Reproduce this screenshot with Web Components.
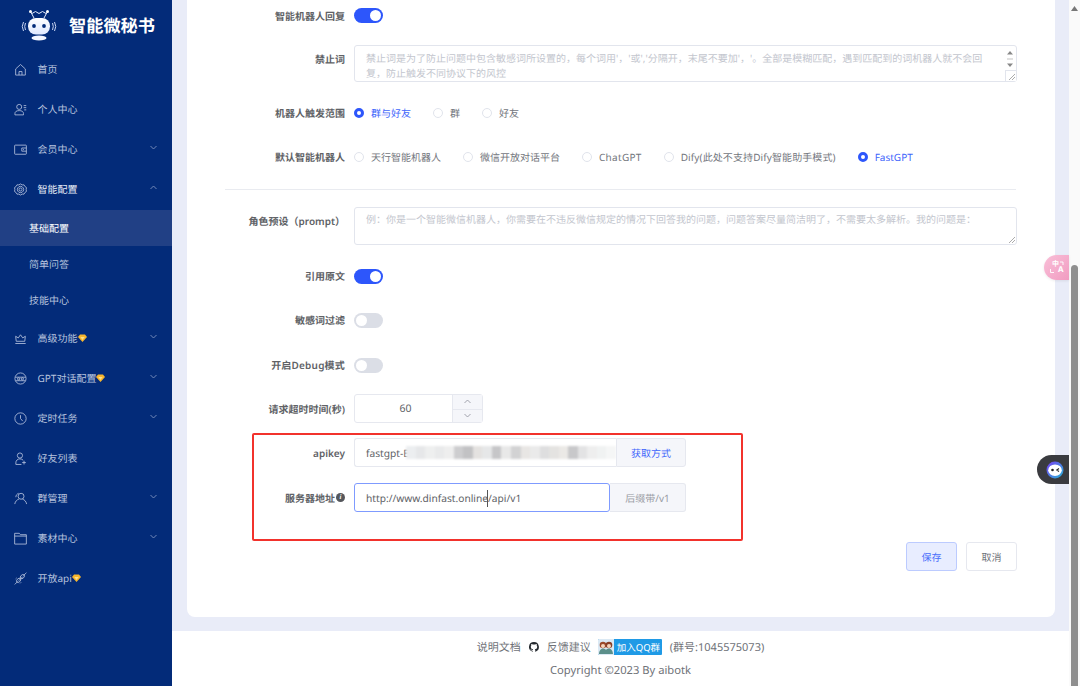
<!DOCTYPE html>
<html lang="zh"><head><meta charset="utf-8"><title>智能微秘书</title>
<style>
html,body{margin:0;height:100%;overflow:hidden;background:#fff}
body{font-family:"Noto Sans","Noto Sans CJK SC",sans-serif;font-size:10px;color:#606266;text-rendering:geometricPrecision}
</style></head><body>
<app-shell>
  <side-nav slot="side">
    <nav-item icon="home" label="首页"></nav-item>
    <nav-item icon="user" label="个人中心"></nav-item>
    <nav-item icon="wallet" label="会员中心" arrow="down"></nav-item>
    <nav-item icon="gear" label="智能配置" arrow="up" open></nav-item>
    <nav-sub label="基础配置" active></nav-sub>
    <nav-sub label="简单问答"></nav-sub>
    <nav-sub label="技能中心"></nav-sub>
    <nav-item icon="crown" label="高级功能" arrow="down" gem></nav-item>
    <nav-item icon="chat" label="GPT对话配置" arrow="down" gem></nav-item>
    <nav-item icon="clock" label="定时任务" arrow="down"></nav-item>
    <nav-item icon="friend" label="好友列表"></nav-item>
    <nav-item icon="group" label="群管理" arrow="down"></nav-item>
    <nav-item icon="folder" label="素材中心" arrow="down"></nav-item>
    <nav-item icon="plug" label="开放api" gem></nav-item>
  </side-nav>
  <config-card>
    <form-row label="智能机器人回复" h="15" mb="22"><x-switch on></x-switch></form-row>
    <form-row label="禁止词" h="37" mb="17" top><x-area h="37" pad="5" lines="禁止词是为了防止问题中包含敏感词所设置的，每个词用'，'或','分隔开，末尾不要加'，'。全部是模糊匹配，遇到匹配到的词机器人就不会回<br>复，防止触发不同协议下的风控" spin></x-area></form-row>
    <form-row label="机器人触发范围" h="28" mb="16"><radio-set>
      <x-radio label="群与好友" on></x-radio><x-radio label="群"></x-radio><x-radio label="好友"></x-radio>
    </radio-set></form-row>
    <form-row label="默认智能机器人" h="28" mb="0"><radio-set>
      <x-radio label="天行智能机器人"></x-radio><x-radio label="微信开放对话平台"></x-radio><x-radio label="ChatGPT" ls=".3"></x-radio><x-radio label="Dify(此处不支持Dify智能助手模式)" ls=".1"></x-radio><x-radio label="FastGPT" on></x-radio>
    </radio-set></form-row>
    <form-rule></form-rule>
    <form-row label="角色预设（prompt）" h="38" mb="17" top><x-area h="38" pad="4" lines="例：你是一个智能微信机器人，你需要在不违反微信规定的情况下回答我的问题，问题答案尽量简洁明了，不需要太多解析。我的问题是："></x-area></form-row>
    <form-row label="引用原文" h="28" mb="16"><x-switch on></x-switch></form-row>
    <form-row label="敏感词过滤" h="28" mb="17"><x-switch></x-switch></form-row>
    <form-row label="开启Debug模式" ls=".2" h="28" mb="15"><x-switch></x-switch></form-row>
    <form-row label="请求超时时间(秒)" h="29" mb="15"><x-number value="60"></x-number></form-row>
    <form-row label="apikey" h="29" mb="16"><x-input value="fastgpt-E" blur addon="获取方式" link w1="262" w2="70"></x-input></form-row>
    <form-row label="服务器地址" h="29" mb="30" info><x-input value="http://www.dinfast.online/api/v1" focus addon="后缀带/v1" w1="256" w2="76"></x-input></form-row>
    <form-actions><x-btn primary>保存</x-btn><x-btn>取消</x-btn></form-actions>
    <red-mark></red-mark>
  </config-card>
  <foot-bar slot="foot"></foot-bar>
  <page-scroll slot="scroll"></page-scroll>
  <float-tools slot="float"></float-tools>
</app-shell>

<script>
const ICONS={
home:'<path d="M1.800 6.400 7 1.600l5.200 4.800V13H1.800z"/><path d="M5.400 13V9.200h3.200V13"/>',
user:'<circle cx="5.600" cy="4.200" r="2.700"/><path d="M1 12.800v-1.400C1 9.200 2.800 8.200 5.600 8.200s4.600 1 4.600 3.200v1.400z"/><path d="M10.400 2.800h2.800M10.400 5h2.800M11 7.400h2.200"/>',
wallet:'<rect x=".7" y="2.300" width="12.600" height="9.800" rx=".6"/><path d="M13.300 5.400H8.400v3.400h4.900"/><path d="M9.800 7.100h1"/>',
gear:'<path d="M7 1l1.800 1.100 2-.1 1 1.800 1.600 1.100-.3 2.100.3 2.100-1.600 1.100-1 1.800-2-.1L7 13l-1.800-1.100-2 .1-1-1.800L.6 9.100.9 7 .6 4.900l1.600-1.100 1-1.800 2 .1z"/><path d="M7 3.600a3.400 3.400 0 1 0 .01 0z"/><circle cx="7" cy="7" r="1.600"/>',
crown:'<path d="M2.400 10 1.800 4.600l2.800 1.800L7 3l2.400 3.400 2.800-1.800-.6 5.400z"/><path d="M1.400 12.400h11.200"/>',
chat:'<circle cx="7" cy="7" r="6"/><path d="M1.400 5.600h11.200M1.600 9.400h10.800"/><circle cx="5" cy="7.400" r="1.200"/><circle cx="9" cy="7.400" r="1.200"/>',
clock:'<circle cx="7" cy="7" r="6.100"/><path d="M7 3.400V7l2.400 2.800"/>',
friend:'<circle cx="6.400" cy="3.800" r="2.800"/><path d="M2 13.400v-1.800C2 9.200 3.800 7.400 6.400 7.400c1.400 0 2.600.5 3.400 1.400M2 13.400h6"/><path d="M10.800 9.400v4M8.800 11.400h4"/>',
group:'<circle cx="7.600" cy="4.600" r="3.200"/><path d="M.8 13c.6-3 2.400-4.800 4.400-5.200M13.600 13c-.6-3-2.400-4.800-4.400-5.200"/><path d="M2 5.600C2 3.600 3.200 2 5 1.400"/>',
folder:'<path d="M.7 13V1.400h5l1.300 1.500h6.300V13z"/><path d="M.7 4.400h12.600"/>',
plug:'<path d="M.8 13.400 4 10.200M10.200 3.800 13.400.8M5 9.400 9.400 5"/><ellipse cx="5" cy="9" rx="2.600" ry="1.800" transform="rotate(-45 5 9)"/><ellipse cx="9" cy="5" rx="2.600" ry="1.800" transform="rotate(-45 9 5)"/><path d="M1.800 7.400l1-1M6.600 12.200l1-1"/>'
};
const GEM='<svg width="9" height="8" viewBox="0 0 9 8" style="flex:none"><path d="M2 .5h5L9 3 4.500 8 0 3z" fill="#f8b62d"/><path d="M2.400 3h4.200L4.500 6z" fill="#ffe08a"/></svg>';
function def(name,render){customElements.define(name,class extends HTMLElement{connectedCallback(){if(this.shadowRoot)return;this.attachShadow({mode:'open'}).innerHTML=render(this)}})}

def('app-shell',()=>`<style>
:host{display:grid;grid-template-columns:172px 1fr 11px;grid-template-rows:1fr 55px;width:1080px;height:686px;position:relative;overflow:hidden}
.s{grid-row:1/3}.sc{grid-column:3;grid-row:1/3}
.m{background:#e9ecf8;overflow:hidden;min-width:0}
.f{grid-column:2;grid-row:2}
</style>
<div class="s"><slot name="side"></slot></div><div class="m"><slot></slot></div><div class="f"><slot name="foot"></slot></div><div class="sc"><slot name="scroll"></slot></div><slot name="float"></slot>`);

def('side-nav',()=>`<style>
:host{display:flex;flex-direction:column;height:100%;background:#032b79;color:#b7c3de}
.logo{height:49px;display:flex;align-items:center;gap:12px;padding-left:21px;box-sizing:border-box;flex:none}
.t{font-family:"Noto Sans CJK SC",sans-serif;font-weight:700;font-size:17.2px;color:#fff;margin-top:-1px}
</style>
<div class="logo"><svg width="36" height="32" viewBox="0 0 36 32" style="margin-top:1px"><defs><linearGradient id="h" x1="0" y1="0" x2="0" y2="1"><stop offset="0" stop-color="#fff"/><stop offset="1" stop-color="#dfe8ff"/></linearGradient></defs>
<path d="M9.500 2.500 13 9M26.500 2.500 23 9M11 4.500l3.500-2 3.500 2 3.500-2 3.500 2" fill="none" stroke="#e6edff" stroke-width="1"/><circle cx="9.500" cy="2.500" r="1.500" fill="#fff"/><circle cx="26.500" cy="2.500" r="1.500" fill="#fff"/>
<path d="M4.500 14q-1.600 3.500 0 7M2.500 13q-2.500 4.500 0 9M31.500 14q1.600 3.500 0 7M33.500 13q2.500 4.500 0 9" fill="none" stroke="#c7d4f2" stroke-width="1"/>
<rect x="7" y="9" width="22" height="16.500" rx="8" fill="url(#h)"/><ellipse cx="13" cy="17" rx="1.900" ry="2" fill="#032b79"/><ellipse cx="23" cy="17" rx="1.900" ry="2" fill="#032b79"/>
<ellipse cx="18" cy="29" rx="7.500" ry="2.500" fill="#f2f5ff"/></svg><span class="t">智能微秘书</span></div><slot></slot>`);

def('nav-item',e=>{const a=e.getAttribute('arrow');const c=e.hasAttribute('open')?'#e6ebf6':'#b7c3de';
return `<style>
:host{display:flex;align-items:center;height:40px;flex:none;color:${c};position:relative;padding-left:14px;font-size:10px}
svg.i{width:13px;height:13px;fill:none;stroke:#b7c3de;stroke-width:.9;flex:none;margin-right:10.500px}
.l{display:flex;align-items:center;white-space:nowrap;margin-top:-1px}
.a{position:absolute;left:150px;top:16px;width:7px;height:5px;fill:none;stroke:#7f93bf;stroke-width:.9}
</style><svg class="i" viewBox="0 0 14 14">${ICONS[e.getAttribute('icon')]}</svg><span class="l">${e.getAttribute('label')}${e.hasAttribute('gem')?GEM:''}</span>${a?`<svg class="a" viewBox="0 0 7 5"><path d="${a=='up'?'M.5 4 3.500 1l3 3':'M.5 1l3 3 3-3'}"/></svg>`:''}`});

def('nav-sub',e=>`<style>
:host{display:flex;align-items:center;height:36px;padding-left:29px;flex:none;font-size:10px;color:${e.hasAttribute('active')?'#fff':'#b7c3de'};background:${e.hasAttribute('active')?'#214085':'transparent'};${e.getAttribute('label')=='基础配置'?'margin-top:1px;':''}}
span{margin-top:-2px}
</style><span>${e.getAttribute('label')}</span>`);

def('config-card',()=>`<style>
:host{display:block;position:relative;box-sizing:border-box;height:617px;margin:0 14px 0 15px;padding:8px 38px 0 38px;background:#fff;border-radius:0 0 8px 8px}
</style><slot></slot>`);

def('form-row',e=>{const h=e.getAttribute('h'),mb=e.getAttribute('mb');const top=e.hasAttribute('top');
return `<style>
:host{display:flex;height:${h}px;margin-bottom:${mb}px;align-items:${top?'flex-start':'center'};position:relative}
.l{position:absolute;right:calc(100% - 120px);white-space:nowrap;font-weight:600;color:#606266;font-size:10px;line-height:14px;display:flex;align-items:center;gap:1px;letter-spacing:${e.getAttribute('ls')||0}px;${top?'top:7px;':''}}
.b{margin-left:129px;flex:1;min-width:0}
i{display:inline-block;width:9px;height:9px;border-radius:50%;background:#55575c;color:#fff;font:italic bold 7px/9px "Liberation Serif",serif;text-align:center}
</style><span class="l">${e.getAttribute('label')}${e.hasAttribute('info')?'<i>i</i>':''}</span><div class="b"><slot></slot></div>`});

def('form-rule',()=>`<style>:host{display:block;height:1px;background:#e9ebf0;margin:18px 1px 17px 0}</style>`);

def('x-switch',e=>{const on=e.hasAttribute('on');return `<style>
:host{display:block;width:29px;height:15px;border-radius:8px;background:${on?'#2d56fb':'#dbdee6'};position:relative}
b{position:absolute;top:2px;${on?'right:2px':'left:2px'};width:11px;height:11px;border-radius:50%;background:#fff}
</style><b></b>`});

def('radio-set',()=>`<style>:host{display:flex;gap:22px;align-items:center}</style><slot></slot>`);
def('x-radio',e=>{const on=e.hasAttribute('on');return `<style>
:host{display:flex;align-items:center;gap:7px;white-space:nowrap;font-size:10px;color:${on?'#3f66fb':'#73767d'}}
b{box-sizing:border-box;width:10px;height:10px;border-radius:50%;flex:none;${on?'border:3px solid #2d56fb;background:#fff':'border:1px solid #e1e4ec;background:#fff'}}
span{margin-top:-1px;letter-spacing:${e.getAttribute('ls')||0}px}
</style><b></b><span>${e.getAttribute('label')}</span>`});

def('x-area',e=>`<style>
:host{display:block;box-sizing:border-box;height:${e.getAttribute('h')}px;border:1px solid #e2e5ed;border-radius:3px;position:relative;padding:${e.getAttribute('pad')}px 0 0 11px;font-size:10px;line-height:15px;color:#c3c6ce;background:#fff;white-space:nowrap}
.sb{position:absolute;right:0;top:0;bottom:0;width:11px}
.sb svg{position:absolute;left:1px;top:4px}
.g{position:absolute;right:0;bottom:0;width:11px;height:11px;background:#fff;border:1px solid #e2e5ed;box-sizing:border-box;border-right:0;border-bottom:0}
.g2{position:absolute;right:1px;bottom:1px;width:6px;height:6px}
</style>${e.getAttribute('lines')}
${e.hasAttribute('spin')?'<div class="sb"><svg width="8" height="18" viewBox="0 0 8 18"><path d="M4 1 7 4.500H1zM4 17 7 13.500H1z" fill="#888"/><path d="M1 9h6" stroke="#aaa" stroke-width=".7"/></svg></div><div class="g"></div>':''}
<svg class="g2" viewBox="0 0 6 6"><path d="M0 6 6 0M3 6l3-3" stroke="#888" stroke-width=".7"/></svg>`);

def('x-number',e=>`<style>
:host{display:flex;width:129px;height:29px;box-sizing:border-box;border:1px solid #e6e8ef;border-radius:3px;font-size:10.500px;color:#606266}
.v{flex:1;display:flex;align-items:center;justify-content:center;padding:1px 0 0 4px}
.c{width:29px;border-left:1px solid #e6e8ef;background:#f5f6fa;display:grid;grid-template-rows:1fr 1fr}
.c div{display:flex;align-items:center;justify-content:center}
.c div+div{border-top:1px solid #e6e8ef}
svg{width:7px;height:5px;fill:none;stroke:#8d9099;stroke-width:.8}
</style><div class="v">${e.getAttribute('value')}</div><div class="c"><div><svg viewBox="0 0 7 5"><path d="M.5 4 3.500 1l3 3"/></svg></div><div><svg viewBox="0 0 7 5"><path d="M.5 1l3 3 3-3"/></svg></div></div>`);

def('x-input',e=>{const f=e.hasAttribute('focus'),bl=e.hasAttribute('blur');
const cols=['#eceef0','#e6e7e9','#eeefef','#e9eaeb','#eeeeee','#cdcdcf','#c2c2c4','#e4e2e0','#e6e7e8','#c6c6c8','#e8e8e8','#d2d2d3','#e8e6e4','#eaeaea','#dededf','#e4e3e1','#ebe9e6','#c8c8ca','#e3e3e4','#eeeeee','#f0f2f2','#f5f6f6'];
return `<style>
:host{display:flex;height:29px;font-size:10.200px;color:#606266;width:${+e.getAttribute('w1')+ +e.getAttribute('w2')}px}
.v{box-sizing:border-box;width:${e.getAttribute('w1')}px;border:1px solid ${f?'#7f9bff':'#e6e8ef'};border-radius:3px 0 0 3px;${f?'border-radius:3px;':'border-right:0;'}display:flex;align-items:center;padding-left:11px;position:relative;overflow:hidden;white-space:nowrap}
.a{box-sizing:border-box;flex:1;background:#f5f6fa;border:1px solid #e6e8ef;${f?'border-left:0;':''}border-radius:0 3px 3px 0;display:flex;align-items:center;justify-content:center;font-size:10px;color:${e.hasAttribute('link')?'#3f66fb':'#9a9da5'}}
.mz{position:absolute;left:51px;right:0;top:7px;height:13px;display:flex;filter:blur(1.2px)}
.mz u{flex:1;display:block}
.cur{position:absolute;left:131.500px;top:6px;height:17px;width:1px;background:#555}
</style><div class="v">${e.getAttribute('value')}${bl?`<div class="mz">${cols.map(c=>`<u style="background:${c}"></u>`).join('')}</div>`:''}${f?'<span class="cur"></span>':''}</div><div class="a">${e.getAttribute('addon')}</div>`});

def('form-actions',()=>`<style>:host{display:flex;justify-content:flex-end;gap:9px}</style><slot></slot>`);
def('x-btn',e=>{const p=e.hasAttribute('primary');return `<style>
:host{display:flex;align-items:center;justify-content:center;box-sizing:border-box;width:51px;height:29px;border-radius:3px;font-size:10px;border:1px solid ${p?'#bccbff':'#e6e8ef'};background:${p?'#e8edff':'#fff'};color:${p?'#4a6ffb':'#6f7279'}}
</style><slot></slot>`});
def('red-mark',()=>`<style>:host{position:absolute;left:65px;top:433px;width:491px;height:108px;box-sizing:border-box;border:2px solid #f2322c;border-radius:2px;pointer-events:none}</style>`);

def('foot-bar',()=>`<style>
:host{display:flex;flex-direction:column;align-items:center;height:55px;background:#fff;font-size:11px;color:#6f7278}
.a{display:flex;align-items:center;height:16px;margin-top:8px;white-space:nowrap}
.b{margin-top:8px;line-height:16px;font-size:11.200px}
.q{display:flex;align-items:center;width:64px;height:16px;background:#1f9ae6;color:#fff;font-size:9.500px;margin:0 8px 0 7px;box-sizing:border-box;border-radius:1px;overflow:hidden}
.q svg{flex:none;margin-right:3px}
.gh{margin:0 8px;flex:none}
</style>
<div class="a"><span>说明文档</span><svg class="gh" width="10" height="10" viewBox="0 0 16 16"><path fill="#24292e" d="M8 0a8 8 0 0 0-2.500 15.600c.4.100.5-.2.500-.4v-1.400c-2.200.5-2.700-1-2.700-1-.4-.9-.9-1.200-.9-1.200-.7-.5.100-.5.100-.5.800.100 1.200.8 1.200.8.700 1.200 1.900.9 2.300.7.100-.5.300-.9.500-1.100-1.800-.2-3.600-.9-3.600-4 0-.9.300-1.600.8-2.100-.1-.2-.4-1 .1-2.100 0 0 .7-.2 2.200.8a7.500 7.500 0 0 1 4 0c1.500-1 2.200-.8 2.200-.8.400 1.100.2 1.900.1 2.100.5.600.8 1.300.8 2.100 0 3.100-1.900 3.700-3.700 3.900.3.300.6.800.6 1.500v2.200c0 .2.100.5.600.4A8 8 0 0 0 8 0z"/></svg><span>反馈建议</span><span class="q"><svg width="16" height="16" viewBox="0 0 16 16"><rect width="16" height="16" fill="#dbe9f4"/><circle cx="5" cy="6" r="3.300" fill="#9b4a2a"/><circle cx="11" cy="6" r="3.300" fill="#8a3f26"/><circle cx="5" cy="7" r="2" fill="#f6d5bd"/><circle cx="11" cy="7" r="2" fill="#f6d5bd"/><path d="M1 15c0-3 1.800-5.500 4-5.500S8 11 8 11s.8-1.500 3-1.500 4 2.500 4 5.500z" fill="#5b8f8a"/></svg>加入QQ群</span><span>(群号:1045575073)</span></div>
<div class="b">Copyright ©2023 By aibotk</div>`);

def('page-scroll',()=>`<style>
:host{display:block;height:100%;background:#fafafa;position:relative;box-sizing:border-box}
.t{position:absolute;left:2px;top:265px;bottom:0;width:7px;background:#8f8f8f;border-radius:4px 4px 0 0}
svg{position:absolute;left:2px;top:6px}
</style><svg width="7" height="5" viewBox="0 0 7 5"><path d="M3.500 0 7 5H0z" fill="#777"/></svg><div class="t"></div>`);

def('float-tools',()=>`<style>
:host{display:contents}
.p{position:absolute;right:11px;top:255px;width:25px;height:25px;border-radius:13px 0 0 13px;background:linear-gradient(135deg,#f9bfd8,#f19cc1);color:#fff;box-shadow:0 1px 3px rgba(0,0,0,.08);font-family:"Noto Sans CJK SC",sans-serif;font-weight:700}
.p span{position:absolute;line-height:6px;height:6px}
.z{left:8px;top:6px;font-size:7px}
.e{left:14px;top:12px;font-size:8px;font-family:"Noto Sans",sans-serif}
.p svg{position:absolute;left:0;top:0}
.d{position:absolute;right:11px;top:455px;width:32px;height:29px;border-radius:14.500px 0 0 14.500px;background:#3a3b3f;display:flex;align-items:center;padding-left:9px;box-sizing:border-box}
</style><div class="p"><span class="z">中</span><span class="e">A</span><svg width="25" height="25" viewBox="0 0 25 25"><path d="M16 7h3v3M6.500 14v3.500H10" fill="none" stroke="#fff" stroke-width=".9"/></svg></div>
<div class="d"><svg width="18" height="18" viewBox="0 0 18 18"><defs><linearGradient id="r" x1="0" y1="0" x2="1" y2="1"><stop offset="0" stop-color="#7a3ff2"/><stop offset="1" stop-color="#25b5d8"/></linearGradient></defs><circle cx="9" cy="9" r="8.500" fill="url(#r)"/><ellipse cx="9" cy="9.200" rx="6.800" ry="5.800" fill="#fff"/><circle cx="6.500" cy="9" r="1.300" fill="#222"/><path d="M13 7.500 10.800 9l2.200 1.500" stroke="#222" stroke-width="1.100" fill="none"/></svg></div>`);
</script>
</body></html>
